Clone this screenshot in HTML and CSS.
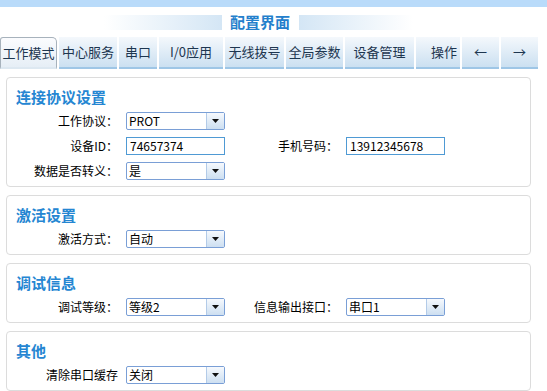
FILE: index.html
```html
<!DOCTYPE html>
<html lang="zh-CN">
<head>
  <meta charset="UTF-8" />
  <title>配置界面</title>
  <link rel="stylesheet" href="styles.css">
</head>
<body>

  <div class="topbar"></div>

  <div class="title-row">
    <span class="title-bar left"></span>
    <h1 class="title">配置界面</h1>
    <span class="title-bar right"></span>
  </div>

  <ul class="tabs">
    <li class="tab active w57">工作模式</li>
    <li class="tab w58">中心服务</li>
    <li class="tab w38">串口</li>
    <li class="tab w64">I/0应用</li>
    <li class="tab w59">无线拨号</li>
    <li class="tab w57">全局参数</li>
    <li class="tab w69">设备管理</li>
    <li class="tab w44 tab-right">操作</li>
    <li class="tab w37">&larr;</li>
    <li class="tab w37">&rarr;</li>
  </ul>

  <div class="group">
    <h2 class="group-title">连接协议设置</h2>
    <div class="row">
      <label class="label">工作协议：</label>
      <div class="combo"><span class="combo-text">PROT</span><span class="combo-btn"><svg width="7" height="4" viewBox="0 0 7 4"><path d="M0 0h7L3.5 4z" fill="#111"/></svg></span></div>
    </div>
    <div class="row">
      <label class="label">设备ID：</label>
      <div class="text-input">74657374</div>
      <label class="label">手机号码：</label>
      <div class="text-input">13912345678</div>
    </div>
    <div class="row">
      <label class="label">数据是否转义：</label>
      <div class="combo"><span class="combo-text">是</span><span class="combo-btn"><svg width="7" height="4" viewBox="0 0 7 4"><path d="M0 0h7L3.5 4z" fill="#111"/></svg></span></div>
    </div>
  </div>

  <div class="group">
    <h2 class="group-title">激活设置</h2>
    <div class="row">
      <label class="label">激活方式：</label>
      <div class="combo"><span class="combo-text">自动</span><span class="combo-btn"><svg width="7" height="4" viewBox="0 0 7 4"><path d="M0 0h7L3.5 4z" fill="#111"/></svg></span></div>
    </div>
  </div>

  <div class="group">
    <h2 class="group-title">调试信息</h2>
    <div class="row">
      <label class="label">调试等级：</label>
      <div class="combo"><span class="combo-text">等级2</span><span class="combo-btn"><svg width="7" height="4" viewBox="0 0 7 4"><path d="M0 0h7L3.5 4z" fill="#111"/></svg></span></div>
      <label class="label">信息输出接口：</label>
      <div class="combo"><span class="combo-text">串口1</span><span class="combo-btn"><svg width="7" height="4" viewBox="0 0 7 4"><path d="M0 0h7L3.5 4z" fill="#111"/></svg></span></div>
    </div>
  </div>

  <div class="group">
    <h2 class="group-title">其他</h2>
    <div class="row">
      <label class="label">清除串口缓存</label>
      <div class="combo"><span class="combo-text">关闭</span><span class="combo-btn"><svg width="7" height="4" viewBox="0 0 7 4"><path d="M0 0h7L3.5 4z" fill="#111"/></svg></span></div>
    </div>
  </div>

</body>
</html>
```

FILE: styles.css
```css
body {
  font-family: "Noto Sans CJK SC", "Liberation Sans", sans-serif;
  font-size: 12px;
  color: #000;
  background: #fff;
  margin: 0;
}

.topbar {
  height: 7px;
  background: #b9dbfa;
}

/* title with fading bars */
.title-row {
  display: flex;
  align-items: center;
  height: 30px;
  padding-left: 104px;
}

.title-bar {
  height: 15px;
}

.title-bar.left {
  width: 118px;
  background: linear-gradient(to right, #ffffff, #d4e6f5);
}

.title-bar.right {
  width: 114px;
  background: linear-gradient(to right, #d4e6f5, #ffffff);
}

.title {
  margin: 0 9px 0 8px;
  font-size: 15px;
  font-weight: bold;
  color: #2480cc;
  line-height: 20px;
}

/* tabs */
.tabs {
  display: flex;
  gap: 2px;
  list-style: none;
  margin: 0;
  padding: 0;
  height: 32px;
}

.tab {
  box-sizing: border-box;
  height: 32px;
  line-height: 30px;
  text-align: center;
  font-size: 13px;
  color: #1d3650;
  background: linear-gradient(#f4f8fc, #cbe0f1);
  border-bottom: 2px solid #9ec6e6;
}

.tab.active {
  background: linear-gradient(#fbfcfe, #e6eef6);
  border: 1px solid #a7b2bc;
  border-bottom: 2px solid #dde8f1;
  border-radius: 3px 5px 0 0;
  line-height: 29px;
}

.tab-right {
  text-align: right;
  padding-right: 3px;
}

.w37 { width: 37px; }
.w38 { width: 38px; }
.w44 { width: 44px; }
.w57 { width: 57px; }
.w58 { width: 58px; }
.w59 { width: 59px; }
.w64 { width: 64px; }
.w69 { width: 69px; }

/* form groups */
.group {
  margin: 8px 16px 0 6px;
  padding: 9px 0 6px;
  border: 1px solid #dcdcdc;
  border-radius: 4px;
  display: flex;
  flex-direction: column;
  gap: 7px;
}

.group-title {
  margin: 0 0 -2px;
  padding-left: 9px;
  font-size: 15px;
  font-weight: bold;
  line-height: 20px;
  color: #2586d2;
}

.row {
  display: grid;
  grid-template-columns: 111px 99px 105px 99px;
  column-gap: 8px;
  height: 18px;
}

.label {
  text-align: right;
  line-height: 18px;
  white-space: nowrap;
}

.combo, .text-input {
  box-sizing: border-box;
  height: 18px;
  border: 1px solid #7a9fd6;
  border-radius: 2px;
  background: #fff;
  line-height: 16px;
}

.combo {
  display: flex;
}

.combo-text {
  flex: 1;
  padding-left: 2px;
  overflow: hidden;
}

.combo-btn {
  width: 17px;
  display: flex;
  align-items: center;
  justify-content: center;
  border-left: 1px solid #b3cbe8;
  background: linear-gradient(#f6f9fd, #cddff1);
}

.text-input {
  border-color: #4f9ad4;
  border-radius: 0;
  padding-left: 3px;
}
```
